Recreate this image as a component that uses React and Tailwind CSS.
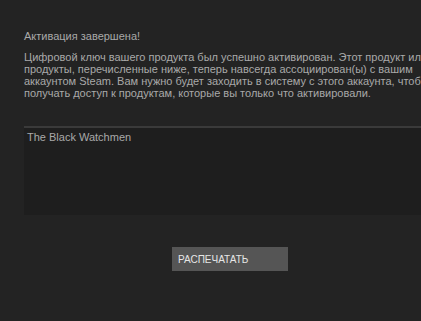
export default function App() {
  return (
    <div
      className="w-[421px] h-[321px] overflow-hidden bg-[#232323] text-[#a9a9a9]"
      style={{ fontFamily: '"Liberation Sans", Arial, sans-serif' }}
    >
      <div className="pl-6 pt-[29px] w-[480px]">
        <div className="text-[11px] leading-[14px]">Активация завершена!</div>
        <p className="mt-[8px] text-[11px] leading-[12px] w-[430px]">
          Цифровой ключ вашего продукта был успешно активирован. Этот продукт или
          продукты, перечисленные ниже, теперь навсегда ассоциирован(ы) с вашим
          аккаунтом Steam. Вам нужно будет заходить в систему с этого аккаунта, чтобы
          получать доступ к продуктам, которые вы только что активировали.
        </p>
        <div className="mt-[27px] h-[89px] border-t-2 border-[#3a3a3a] bg-[#1e1e1e] px-[3px] pt-[2px] text-[11px] leading-[14px]">
          The Black Watchmen
        </div>
        <div className="mt-[32px] ml-[148px] w-[116px] h-[24px] bg-[#555555] text-[#e6e6e6] text-[10px] flex items-center pl-[6px]">
          РАСПЕЧАТАТЬ
        </div>
      </div>
    </div>
  );
}
